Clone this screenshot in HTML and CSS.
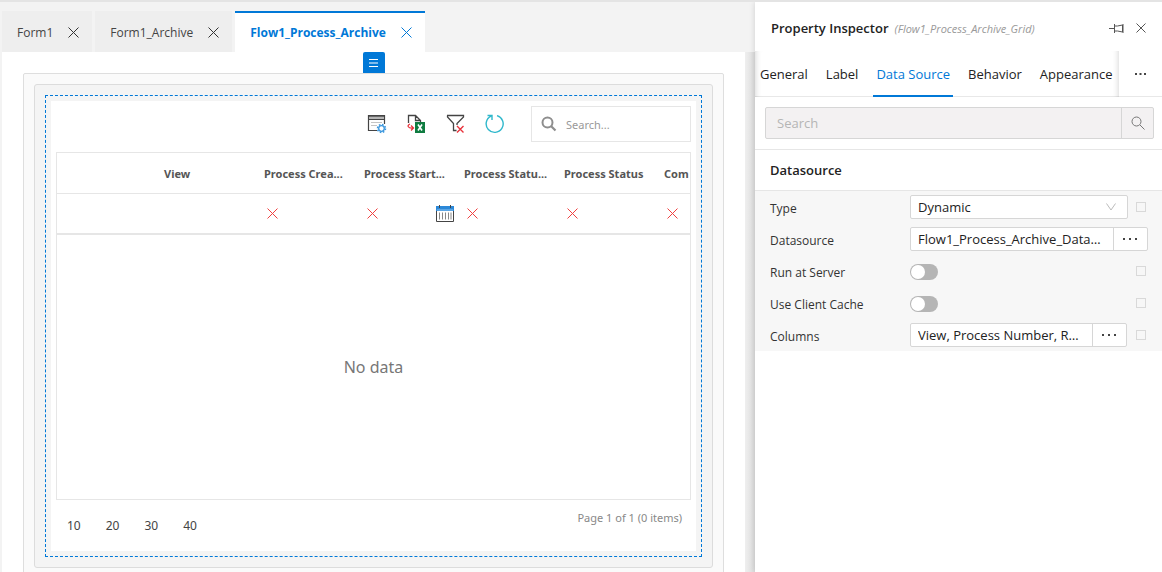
FILE: index.html
```html
<!DOCTYPE html>
<html lang="en">

<head>
  <meta charset="UTF-8">
  <meta name="viewport" content="width=device-width, initial-scale=1.0">
  <title>Flow1_Process_Archive</title>
  <link rel="stylesheet" href="styles.css">
</head>

<body>
  <div class="app">
    <main class="designer">
      <nav class="tabs">
        <div class="tab">
          <button class="tab-name">Form1</button>
          <button class="tab-close" aria-label="Close">
            <svg viewBox="0 0 11 11"><path d="M.5.5l10 10M10.5.5l-10 10" /></svg>
          </button>
        </div>
        <div class="tab">
          <button class="tab-name">Form1_Archive</button>
          <button class="tab-close" aria-label="Close">
            <svg viewBox="0 0 11 11"><path d="M.5.5l10 10M10.5.5l-10 10" /></svg>
          </button>
        </div>
        <div class="tab active">
          <button class="tab-name">Flow1_Process_Archive</button>
          <button class="tab-close" aria-label="Close">
            <svg viewBox="0 0 11 11"><path d="M.5.5l10 10M10.5.5l-10 10" /></svg>
          </button>
        </div>
      </nav>

      <div class="canvas">
        <button class="canvas-menu" aria-label="Menu">
          <svg viewBox="0 0 9 8"><path d="M0 .5h9M0 4h9M0 7.5h9" /></svg>
        </button>

        <div class="form-outer">
          <div class="form-inner">
            <div class="selected">
              <section class="grid">
                <div class="toolbar">
                  <button class="tool" aria-label="Columns">
                    <svg viewBox="0 0 20 20" fill="none">
                      <path d="M1.5 17V1.5h16V10M1.5 16.5H10" stroke="#444" stroke-width="1.2" />
                      <path d="M1 2h17" stroke="#444" stroke-width="1.6" />
                      <path d="M2 4h15" stroke="#b5b5b5" stroke-width="2" />
                      <path d="M1 5.5h17" stroke="#444" />
                      <path d="M4 8.5h11M4 11.5h6" stroke="#c4c4c4" />
                      <circle cx="14.5" cy="14.5" r="4" stroke="#3a96dd" stroke-width="1.5" stroke-dasharray="1.6 1.541" />
                      <circle cx="14.5" cy="14.5" r="2.8" stroke="#3a96dd" stroke-width="1.3" />
                    </svg>
                  </button>
                  <button class="tool" aria-label="Export to Excel">
                    <svg viewBox="0 0 20 20" fill="none">
                      <path d="M2.5 9V1.5h7l5 5V8M9.5 1.5v5h5" stroke="#444" stroke-width="1.3" />
                      <path d="M4 10c-3.500 1.500-2 4.500 3 4M5 11.500L7.500 14 5 16.500" stroke="#e8333c" stroke-width="1.3" />
                      <rect x="9" y="8" width="10" height="11" fill="#107c41" />
                      <path d="M12 10.500l4 6M16 10.500l-4 6" stroke="#fff" stroke-width="1.6" />
                    </svg>
                  </button>
                  <button class="tool" aria-label="Clear filter">
                    <svg viewBox="0 0 20 20" fill="none">
                      <path d="M2 1.500h16.500V3L12 9.500V11M2.500 1.500V3l6 6.500v7h3" stroke="#444" stroke-width="1.3" />
                      <path d="M12 12l6.500 6.500M18.500 12L12 18.500" stroke="#e8333c" stroke-width="1.4" />
                    </svg>
                  </button>
                  <button class="tool" aria-label="Refresh">
                    <svg viewBox="0 0 20 20" fill="none">
                      <path d="M13 1.700A8.500 8.500 0 1 1 7 2.200M3.500 1.500H8V6" stroke="#30b8cc" stroke-width="1.4" />
                    </svg>
                  </button>
                  <label class="grid-search">
                    <svg viewBox="0 0 16 16" fill="none">
                      <circle cx="6.5" cy="6.5" r="5" stroke="#8e8e8e" stroke-width="2" />
                      <path d="M10 10l4.500 4.500" stroke="#8e8e8e" stroke-width="2.2" />
                    </svg>
                    <input type="text" placeholder="Search..." aria-label="Search in grid">
                  </label>
                </div>

                <div class="grid-view">
                  <table>
                    <thead>
                      <tr>
                        <th></th>
                        <th>View</th>
                        <th>Process Crea...</th>
                        <th>Process Start...</th>
                        <th>Process Statu...</th>
                        <th>Process Status</th>
                        <th>Com</th>
                      </tr>
                    </thead>
                    <tbody>
                      <tr>
                        <td></td>
                        <td></td>
                        <td><button class="clear" aria-label="Clear"><svg viewBox="0 0 11 11"><path d="M.5.5l10 10M10.5.5l-10 10" /></svg></button></td>
                        <td>
                          <div class="date-filter">
                            <button class="clear" aria-label="Clear"><svg viewBox="0 0 11 11"><path d="M.5.5l10 10M10.5.5l-10 10" /></svg></button>
                            <button class="calendar" aria-label="Pick a date">
                              <svg viewBox="0 0 18 17" fill="none">
                                <path d="M.5 5v11.500h17V5" stroke="#444" />
                                <path d="M0 1h18v5H0z" fill="#2b88d8" />
                                <path d="M1 5h16" stroke="#8cc4f2" />
                                <path d="M3.5 0v3M14.5 0v3" stroke="#444" />
                                <path d="M3.5 7.500v7M6.5 7.500v7M9.5 7.500v7M12.5 7.500v7M15 7.500v7" stroke="#888" />
                              </svg>
                            </button>
                          </div>
                        </td>
                        <td><button class="clear" aria-label="Clear"><svg viewBox="0 0 11 11"><path d="M.5.5l10 10M10.5.5l-10 10" /></svg></button></td>
                        <td><button class="clear" aria-label="Clear"><svg viewBox="0 0 11 11"><path d="M.5.5l10 10M10.5.5l-10 10" /></svg></button></td>
                        <td><button class="clear" aria-label="Clear"><svg viewBox="0 0 11 11"><path d="M.5.5l10 10M10.5.5l-10 10" /></svg></button></td>
                      </tr>
                    </tbody>
                  </table>
                  <p class="no-data">No data</p>
                </div>

                <footer class="pager">
                  <div class="page-sizes">
                    <button>10</button>
                    <button>20</button>
                    <button>30</button>
                    <button>40</button>
                  </div>
                  <span class="page-info">Page 1 of 1 (0 items)</span>
                </footer>
              </section>
            </div>
          </div>
        </div>
      </div>
    </main>

    <aside class="inspector">
      <header class="inspector-header">
        <h1>Property Inspector</h1>
        <em>(Flow1_Process_Archive_Grid)</em>
        <button class="pin" aria-label="Pin">
          <svg viewBox="0 0 15 9"><path d="M0 4.500h5M5.500 0v9M5.500 2h3c2 0 3-1 5-1v7c-2 0-3-1-5-1h-3M14 0v9" /></svg>
        </button>
        <button class="inspector-close" aria-label="Close">
          <svg viewBox="0 0 10 10"><path d="M.5.5l9 9M9.500.5l-9 9" /></svg>
        </button>
      </header>

      <nav class="sections">
        <div class="section-list">
          <button>General</button>
          <button>Label</button>
          <button class="active">Data Source</button>
          <button>Behavior</button>
          <button>Appearance</button>
        </div>
        <button class="more" aria-label="More">
          <svg viewBox="0 0 11 2"><path d="M0 0h2v2H0zM4.500 0h2v2h-2zM9 0h2v2H9z" /></svg>
        </button>
      </nav>

      <div class="search">
        <input type="text" placeholder="Search" aria-label="Search properties">
        <button aria-label="Search">
          <svg viewBox="0 0 14 14"><circle cx="5.5" cy="5.5" r="4.5" /><path d="M9 9l4.500 4.500" /></svg>
        </button>
      </div>

      <h2>Datasource</h2>

      <div class="properties">
        <div class="property">
          <label for="type">Type</label>
          <div class="select">
            <select id="type">
              <option>Dynamic</option>
            </select>
            <svg viewBox="0 0 10 8"><path d="M.5.5L5 7 9.500.5" /></svg>
          </div>
          <input class="mark" type="checkbox" aria-label="Mark Type">
        </div>
        <div class="property">
          <label for="datasource">Datasource</label>
          <div class="picker wide">
            <input id="datasource" type="text" value="Flow1_Process_Archive_DataSource">
            <button aria-label="Choose datasource">
              <svg viewBox="0 0 14 2"><path d="M0 0h2v2H0zM6 0h2v2H6zM12 0h2v2h-2z" /></svg>
            </button>
          </div>
        </div>
        <div class="property">
          <label for="server">Run at Server</label>
          <input class="switch" id="server" type="checkbox" role="switch">
          <input class="mark" type="checkbox" aria-label="Mark Run at Server">
        </div>
        <div class="property">
          <label for="cache">Use Client Cache</label>
          <input class="switch" id="cache" type="checkbox" role="switch">
          <input class="mark" type="checkbox" aria-label="Mark Use Client Cache">
        </div>
        <div class="property">
          <label for="columns">Columns</label>
          <div class="picker">
            <input id="columns" type="text" value="View, Process Number, Requester">
            <button aria-label="Choose columns">
              <svg viewBox="0 0 14 2"><path d="M0 0h2v2H0zM6 0h2v2H6zM12 0h2v2h-2z" /></svg>
            </button>
          </div>
          <input class="mark" type="checkbox" aria-label="Mark Columns">
        </div>
      </div>
    </aside>
  </div>
</body>

</html>
```

FILE: styles.css
```css
*,
*::before,
*::after {
  box-sizing: border-box;
}

body {
  font-family: 'Open Sans', 'Noto Sans', sans-serif;
  font-size: 13px;
  background: #f3f3f3;
  color: #222;
  margin: 0;
}

button,
input,
select {
  font: inherit;
  color: inherit;
  margin: 0;
}

button {
  background: none;
  border: 0;
  padding: 0;
  cursor: pointer;
}

svg {
  display: block;
}

.app {
  display: flex;
  height: 100vh;
  border-top: 2px solid #e4e4e4;
  overflow: hidden;
}

.designer {
  flex: 1;
  min-width: 0;
  padding: 9px 0 0 2px;
}

/* tabs */

.tabs {
  display: flex;
  gap: 3px;
  height: 41px;
  font-size: 12px;
}

.tab {
  display: flex;
  align-items: center;
  gap: 15px;
  padding: 0 13px 0 15px;
  background: #eee;
  color: #444;
  border-top: 2px solid transparent;

  svg {
    width: 11px;
    height: 11px;
    stroke: #333;
    fill: none;
  }

  &.active {
    background: #fff;
    border-color: #0078d7;
    color: #0078d7;
    font-weight: 700;

    svg {
      stroke: #0078d7;
    }
  }
}

/* design canvas */

.canvas {
  background: linear-gradient(to left, #dcdcdc, #efefef 10px, #fff 10px);
  padding: 0 31px 0 21px;
}

.canvas-menu {
  display: block;
  width: 22px;
  height: 21px;
  margin: 0 auto;
  padding: 0 6px;
  background: #0078d7;
  border-radius: 2px 2px 0 0;

  svg {
    width: 9px;
    height: 8px;
    stroke: #fff;
    fill: none;
  }
}

.form-outer {
  background: #fafafa;
  border: 1px solid #dedede;
  border-radius: 2px;
  padding: 10px;
}

.form-inner {
  background: #f4f4f4;
  border: 1px solid #dcdcdc;
  border-radius: 3px;
  padding: 10px;
}

.selected {
  border: 1px dashed #0078d7;
  padding: 5px;
}

.grid {
  background: #fff;
  color: #555;
  font-family: 'Noto Sans', 'Open Sans', sans-serif;
  font-size: 11px;
  padding: 5px 5px 15px;
}

.toolbar {
  display: flex;
  justify-content: flex-end;
  align-items: center;
  gap: 19px;
}

.tool svg {
  width: 20px;
  height: 20px;
}

.grid-search {
  display: flex;
  align-items: center;
  gap: 9px;
  width: 160px;
  height: 36px;
  margin-left: 8px;
  padding: 0 9px;
  border: 1px solid #e6e6e6;

  svg {
    flex: none;
    width: 16px;
    height: 16px;
  }

  input {
    width: 100%;
    min-width: 0;
    padding: 0;
    border: 0;
    outline: 0;
  }

  input::placeholder {
    color: #999;
  }
}

.grid-view {
  border: 1px solid #e6e6e6;
  margin-top: 10px;
  overflow: hidden;

  table {
    width: 700px;
    table-layout: fixed;
    border-collapse: collapse;
  }

  th,
  td {
    height: 41px;
    padding: 0 3px 0 7px;
    text-align: left;
    border-bottom: 1px solid #e6e6e6;
  }

  th {
    height: 40px;
    padding-top: 2px;
    overflow: hidden;
    text-overflow: ellipsis;
    white-space: nowrap;
  }

  td {
    border-bottom-width: 2px;
  }
}

.clear {
  display: block;
  padding: 0 3px;

  svg {
    width: 11px;
    height: 11px;
    fill: none;
  }

  path {
    stroke: #f04040;
  }
}

.date-filter {
  display: flex;
  align-items: center;
  justify-content: space-between;
}

.calendar svg {
  width: 18px;
  height: 17px;
}

.no-data {
  display: grid;
  place-content: center;
  height: 264px;
  margin: 0;
  font-size: 16px;
  color: #777;
}

.pager {
  display: flex;
  justify-content: space-between;
  padding: 8px 9px 0 11px;
  line-height: 20px;
}

.page-sizes {
  display: flex;
  gap: 25px;
  padding-top: 8px;
  font-size: 12px;
  color: #444;
}

.page-info {
  color: #888;
}

/* property inspector */

.inspector {
  flex: 0 0 407px;
  min-width: 0;
  background: #fff;
  box-shadow: 0 0 6px rgba(0, 0, 0, .15);

  h1,
  h2 {
    margin: 0;
    font-size: 13px;
    font-weight: 600;
  }

  h2 {
    line-height: 40px;
    padding: 0 15px;
    border: 1px solid #e6e6e6;
    border-width: 1px 0;
  }
}

.inspector-header {
  display: flex;
  align-items: center;
  gap: 6px;
  height: 49px;
  padding: 3px 16px 0;

  em {
    flex: 1;
    font-size: 11px;
    color: #999;
  }

  svg {
    stroke: #555;
    fill: none;
  }
}

.pin svg {
  width: 15px;
  height: 9px;
}

.inspector-close {
  margin-left: 6px;

  svg {
    width: 10px;
    height: 10px;
  }
}

.sections {
  display: flex;
  height: 46px;
  border-bottom: 1px solid #e8e8e8;
}

.section-list {
  display: flex;
  flex: 1;
  gap: 12px;
  height: 46px;
  padding-left: 2px;
  white-space: nowrap;
  box-shadow: inset 6px 0 6px -6px rgba(0, 0, 0, .2), inset -6px 0 6px -6px rgba(0, 0, 0, .2);

  button {
    padding: 2px 3px 0;
    border-bottom: 2px solid transparent;
  }

  .active {
    color: #0078d7;
    border-color: #0078d7;
  }
}

.more {
  width: 43px;
  padding: 0 16px;

  svg {
    width: 11px;
    height: 2px;
    fill: #444;
  }
}

.search {
  display: flex;
  height: 32px;
  margin: 10px 8px 10px 10px;
  background: #f3f1f2;
  border: 1px solid #d6d6d6;
  border-radius: 2px;

  input {
    flex: 1;
    min-width: 0;
    padding: 0 11px;
    background: none;
    border: 0;
    outline: 0;
  }

  input::placeholder {
    color: #b5b5b5;
  }

  button {
    width: 32px;
    padding: 0 9px;
    border-left: 1px solid #d6d6d6;
  }

  svg {
    width: 14px;
    height: 14px;
    stroke: #777;
    fill: none;
  }
}

.properties {
  background: #f7f7f7;
}

.property {
  display: flex;
  align-items: center;
  height: 32px;
  padding: 0 14px 0 15px;

  label {
    width: 140px;
    padding-top: 2px;
    font-size: 12px;
    color: #333;
  }
}

.select {
  position: relative;
  width: 218px;

  select {
    width: 100%;
    height: 24px;
    padding: 0 7px;
    appearance: none;
    background: #fff;
    border: 1px solid #d6d6d6;
    border-radius: 2px;
  }

  svg {
    position: absolute;
    top: 8px;
    right: 12px;
    width: 10px;
    height: 8px;
    stroke: #bbb;
    fill: none;
    pointer-events: none;
  }
}

.picker {
  display: flex;
  width: 217px;
  height: 24px;
  background: #fff;
  border: 1px solid #d6d6d6;
  border-radius: 2px;

  &.wide {
    width: 238px;
  }

  input {
    flex: 1;
    min-width: 0;
    padding: 0 12px 0 7px;
    background: none;
    border: 0;
    outline: 0;
    text-overflow: ellipsis;
  }

  button {
    width: 34px;
    padding: 0 9px;
    border-left: 1px solid #d6d6d6;
  }

  svg {
    width: 14px;
    height: 2px;
    fill: #444;
  }
}

.switch {
  appearance: none;
  width: 28px;
  height: 16px;
  margin-top: 2px;
  padding: 1px;
  background: #b5b5b5;
  border-radius: 8px;

  &::before {
    content: '';
    display: block;
    width: 14px;
    height: 14px;
    background: #fff;
    border-radius: 50%;
  }

  &:checked {
    background: #0078d7;
    padding-left: 13px;
  }
}

.mark {
  appearance: none;
  width: 10px;
  height: 10px;
  margin: 0 2px 0 auto;
  border: 1px solid #d9d9d9;

  &:checked {
    background: #0078d7;
  }
}
```
